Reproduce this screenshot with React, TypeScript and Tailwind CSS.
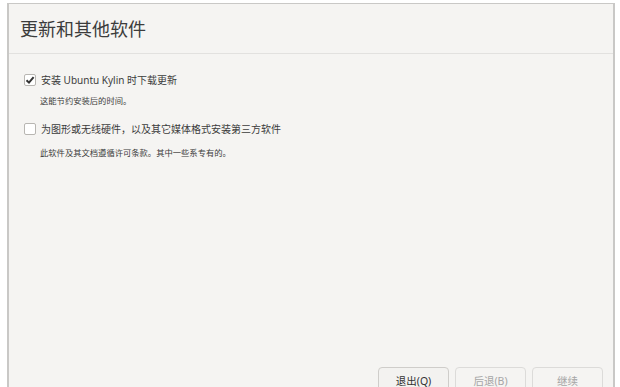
import React from "react";

const font = { fontFamily: '"Noto Sans", "Noto Sans CJK SC", sans-serif' };

function Check({ checked }: { checked: boolean }) {
  return (
    <div className="w-[12px] h-[12px] rounded-[2px] border border-[#b8b6b2] bg-white flex items-center justify-center shrink-0">
      {checked && (
        <svg width="10" height="10" viewBox="0 0 10 10">
          <path d="M1.5 5.2 L4 7.6 L8.6 2.2" stroke="#333" strokeWidth="2" fill="none" />
        </svg>
      )}
    </div>
  );
}

export default function App() {
  return (
    <div className="w-[620px] h-[387px] bg-white overflow-hidden pt-[3px] pl-[7px] pr-[5px]" style={font}>
      <div className="h-[400px] bg-[#f5f4f2] border-l-2 border-t border-r-2 border-[#c9c8c6] flex flex-col">
        <div className="h-[50px] border-b border-[#e2e1df] flex items-center pl-[11px]">
          <span className="text-[18px] text-[#3c3c3c] leading-none">更新和其他软件</span>
        </div>
        <div className="flex flex-col pl-[15px] pt-[20px]">
          <div className="flex items-center gap-[5px]">
            <Check checked />
            <span className="text-[10px] text-[#3c3c3c] leading-none">安装 Ubuntu Kylin 时下载更新</span>
          </div>
          <div className="pl-[16px] mt-[11px] text-[8.3px] text-[#3c3c3c] leading-none">这能节约安装后的时间。</div>
          <div className="flex items-center gap-[5px] mt-[18px]">
            <Check checked={false} />
            <span className="text-[10px] text-[#3c3c3c] leading-none">为图形或无线硬件，以及其它媒体格式安装第三方软件</span>
          </div>
          <div className="pl-[16px] mt-[14px] text-[8.3px] text-[#3c3c3c] leading-none">此软件及其文档遵循许可条款。其中一些系专有的。</div>
        </div>
        <div className="flex-1" />
        <div className="flex justify-end gap-[6px] pr-[10px] h-[36px]">
          <div className="w-[71px] h-[30px] rounded-[4px] border border-[#cfcdca] bg-[#f3f2f0] flex items-center justify-center text-[10.5px] text-[#333]">退出(Q)</div>
          <div className="w-[71px] h-[30px] rounded-[4px] border border-[#dcdbd9] bg-[#f5f4f2] flex items-center justify-center text-[10.5px] text-[#a6a6a6]">后退(B)</div>
          <div className="w-[71px] h-[30px] rounded-[4px] border border-[#dcdbd9] bg-[#f5f4f2] flex items-center justify-center text-[10.5px] text-[#a6a6a6]">继续</div>
        </div>
      </div>
    </div>
  );
}
